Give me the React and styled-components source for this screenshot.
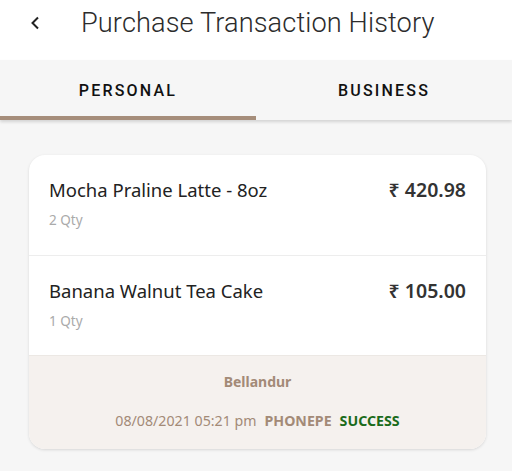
import styled, { createGlobalStyle } from "styled-components";

const Global = createGlobalStyle`
  html, body {
    margin: 0;
    padding: 0;
    background: #f6f6f6;
  }
  body {
    font-family: "Noto Sans", "Open Sans", sans-serif;
  }
`;

const Page = styled.div`
  width: 512px;
  min-height: 471px;
  background: #f6f6f6;
`;

const Header = styled.header`
  height: 60px;
  background: #fff;
  display: flex;
  align-items: center;
  padding-bottom: 15px;
  box-sizing: border-box;
`;

const Back = styled.button`
  border: 0;
  background: none;
  padding: 0;
  margin-left: 28px;
  width: 14px;
  height: 14px;
  display: flex;
  align-items: center;
  justify-content: center;
  cursor: pointer;
`;

const Title = styled.h1`
  margin: 0 0 0 39px;
  font-family: Roboto, sans-serif;
  font-weight: 300;
  font-size: 27.2px;
  color: #2c2c2c;
  letter-spacing: 0.1px;
`;

const Tabs = styled.nav`
  height: 60px;
  background: #f6f6f6;
  display: flex;
  box-shadow: 0 2px 3px rgba(0, 0, 0, 0.14);
  position: relative;
  z-index: 1;
`;

const Tab = styled.div`
  flex: 1;
  display: flex;
  align-items: center;
  justify-content: center;
  font-family: Roboto, sans-serif;
  font-weight: 500;
  font-size: 16px;
  letter-spacing: 2.2px;
  color: #111;
  padding-top: 4px;
  box-sizing: border-box;
  border-bottom: 4px solid ${(p) => (p.$active ? "#a68e7b" : "transparent")};
`;

const Body = styled.main`
  padding: 35px 26px 20px 29px;
`;

const Card = styled.section`
  background: #fff;
  border-radius: 16px;
  overflow: hidden;
  box-shadow: 0 1px 3px rgba(0, 0, 0, 0.13);
`;

const Item = styled.div`
  height: 100px;
  padding: 22px 20px 0 20px;
  box-sizing: border-box;
  display: flex;
  justify-content: space-between;
  align-items: flex-start;
  & + & {
    border-top: 1px solid #ededed;
  }
`;

const ItemInfo = styled.div`
  display: flex;
  flex-direction: column;
  gap: 8px;
`;

const Name = styled.span`
  font-size: 18.5px;
  color: #222;
  line-height: 26px;
`;

const Qty = styled.span`
  font-size: 13.5px;
  color: #aaa;
  line-height: 18px;
`;

const Price = styled.span`
  font-size: 19.5px;
  font-weight: 600;
  color: #333;
  line-height: 26px;
`;

const Footer = styled.div`
  background: #f5f1ee;
  border-top: 1px solid #ece8e4;
  height: 94px;
  display: flex;
  flex-direction: column;
  align-items: center;
  padding-top: 16px;
  box-sizing: border-box;
  gap: 20px;
`;

const Store = styled.span`
  font-size: 14px;
  font-weight: 700;
  color: #a38a77;
`;

const Meta = styled.div`
  display: flex;
  align-items: baseline;
  gap: 8px;
  font-size: 14.2px;
  color: #a38a77;
`;

const Strong = styled.span`
  font-weight: 700;
  color: ${(p) => p.$color || "#a38a77"};
`;

const items = [
  { name: "Mocha Praline Latte - 8oz", qty: "2 Qty", price: "₹ 420.98" },
  { name: "Banana Walnut Tea Cake", qty: "1 Qty", price: "₹ 105.00" },
];

const App = () => {
  return (
    <Page>
      <Global />
      <Header>
        <Back aria-label="Back">
          <svg width="12" height="14" viewBox="0 0 12 14">
            <path d="M9 1.5 L3.5 7 L9 12.5" fill="none" stroke="#222" strokeWidth="2" />
          </svg>
        </Back>
        <Title>Purchase Transaction History</Title>
      </Header>
      <Tabs>
        <Tab $active>PERSONAL</Tab>
        <Tab>BUSINESS</Tab>
      </Tabs>
      <Body>
        <Card>
          {items.map((it) => (
            <Item key={it.name}>
              <ItemInfo>
                <Name>{it.name}</Name>
                <Qty>{it.qty}</Qty>
              </ItemInfo>
              <Price>{it.price}</Price>
            </Item>
          ))}
          <Footer>
            <Store>Bellandur</Store>
            <Meta>
              <span>08/08/2021 05:21 pm</span>
              <Strong>PHONEPE</Strong>
              <Strong $color="#1b6b1b">SUCCESS</Strong>
            </Meta>
          </Footer>
        </Card>
      </Body>
    </Page>
  );
};

export default App;
